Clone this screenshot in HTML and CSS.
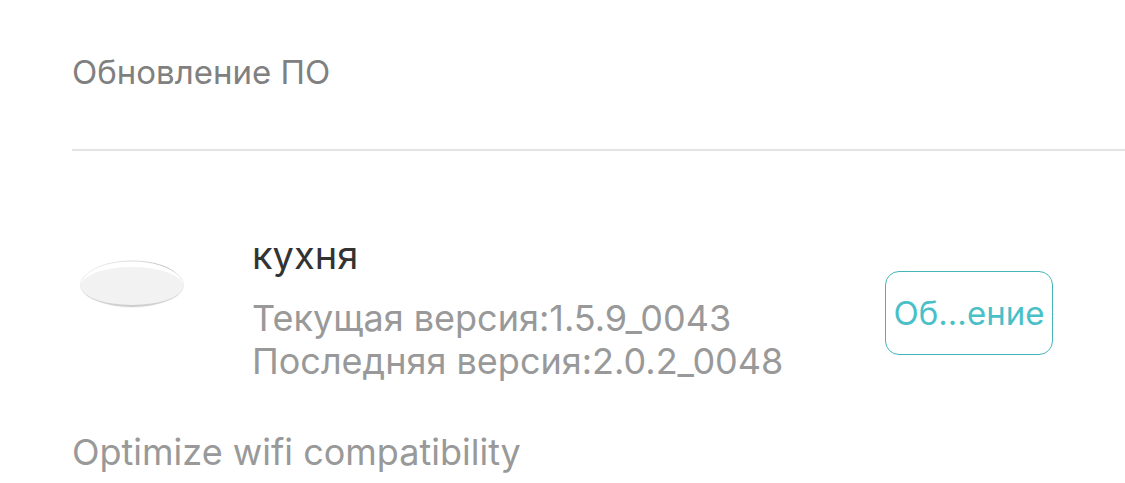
FILE: index.html
```
<!DOCTYPE html>
<html lang="ru">
<head>
<meta charset="utf-8">
<meta name="viewport" content="width=device-width, initial-scale=1">
<title>Обновление ПО</title>
<link rel="stylesheet" href="styles.css">
</head>
<body>
<main class="page">
  <h1 class="page-title">Обновление ПО</h1>
  <section class="device">
    <div class="device-row">
      <svg class="device-icon" viewBox="0 0 104 50" aria-hidden="true">
        <defs>
          <linearGradient id="rim" x1="0" y1="0" x2="1" y2="0">
            <stop offset="0" stop-color="#eeeeee"/>
            <stop offset="0.6" stop-color="#d8d8d8"/>
            <stop offset="0.85" stop-color="#c0c0c0"/>
            <stop offset="1" stop-color="#eeeeee"/>
          </linearGradient>
          <linearGradient id="shade" x1="0" y1="0" x2="0" y2="1">
            <stop offset="0.5" stop-color="#ededed"/>
            <stop offset="1" stop-color="#cccccc"/>
          </linearGradient>
        </defs>
        <ellipse cx="52" cy="27" rx="46" ry="21" fill="#f7f7f7"/>
        <ellipse cx="52" cy="25" rx="52" ry="22" fill="url(#shade)"/>
        <path d="M1 23C6 8 27 1 52 1s46 7 51 22z" fill="#ffffff"/>
        <path d="M2 20C9 8 29 1 52 1s43 7 50 19" fill="none" stroke="url(#rim)"/>
        <ellipse cx="52" cy="26" rx="51" ry="19" fill="#f2f2f2"/>
      </svg>
      <div class="device-info">
        <h2 class="device-name">кухня</h2>
        <p class="version">Текущая версия:1.5.9_0043</p>
        <p class="version">Последняя версия:2.0.2_0048</p>
      </div>
      <button class="update-button" type="button">Об…ение</button>
    </div>
    <p class="notes">Optimize wifi compatibility</p>
  </section>
</main>
</body>
</html>
```
FILE: styles.css
```
* {
  box-sizing: border-box;
}

body {
  margin: 0;
  background: #ffffff;
  color: #999999;
  font-family: Inter, "Liberation Sans", sans-serif;
  font-size: 36px;
}

h1,
h2,
p {
  margin: 0;
  font-weight: 400;
}

.page {
  padding: 50px 0 0 72px;
}

.page-title {
  color: #808080;
  font-size: 33px;
  line-height: 44px;
}

.device {
  margin-top: 55px;
  padding: 79px 72px 0 0;
  border-top: 2px solid #e3e3e3;
}

.device-row {
  display: flex;
  align-items: center;
}

.device-icon {
  flex: none;
  width: 104px;
  height: 50px;
  margin: 0 68px 44px 8px;
}

.device-info {
  flex: 1;
}

.device-name {
  margin-bottom: 17px;
  color: #333333;
  font-size: 38px;
  line-height: 50px;
}

.version {
  line-height: 43px;
}

.update-button {
  flex: none;
  width: 168px;
  height: 84px;
  margin-top: 12px;
  padding: 0;
  border: 1px solid #45b5b8;
  border-radius: 14px;
  background: #ffffff;
  color: #49bfc7;
  font: inherit;
  font-size: 33px;
  white-space: nowrap;
}

.notes {
  margin-top: 45px;
  font-size: 36px;
  line-height: 48px;
}
```
